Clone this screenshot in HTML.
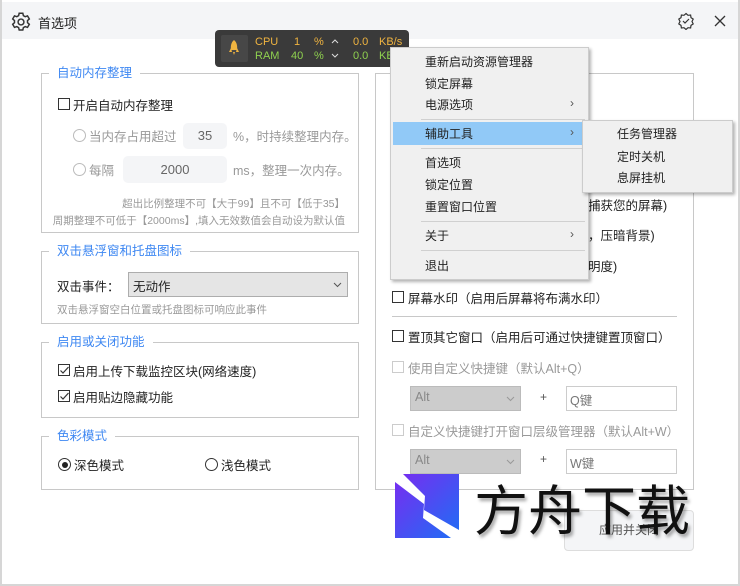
<!DOCTYPE html>
<html><head><meta charset="utf-8"><style>
*{box-sizing:border-box;margin:0;padding:0}
body{width:740px;height:586px;overflow:hidden;background:#fff;font-family:"Liberation Sans","Noto Sans CJK SC",sans-serif;font-size:12px;color:#222;position:relative}
.a{position:absolute;white-space:nowrap}
.win{position:absolute;left:0;top:0;width:740px;height:586px;border:2px solid #d6d6d6;border-top:none}
.tb{position:absolute;left:2px;top:2px;width:736px;height:37px;background:#f4f5f7}
.grp{position:absolute;border:1px solid #c8c8c8}
.lg{position:absolute;background:#fff;color:#3f88f2;font-size:12.5px;padding:0 8px;top:-9px;left:7px;line-height:16px}
.cb{position:absolute;width:12px;height:12px;border:1px solid #333;background:#fff}
.cb.d{border-color:#ccc}
.rd{position:absolute;width:13px;height:13px;border:1px solid #bbb;border-radius:50%;background:#fff}
.inp{position:absolute;background:#f4f5f7;border-radius:5px;text-align:center;color:#666;font-size:13px}
.gray{color:#999}
.menu{position:absolute;background:#f0f0f0;border:1px solid #ccc;box-shadow:2px 2px 3px rgba(0,0,0,.3)}
.sep{position:absolute;height:1px;background:#d0d0d0}
</style></head><body>
<div class="win"></div>
<div class="tb"></div>
<svg class="a" style="left:10px;top:11px" width="22" height="22" viewBox="0 0 24 24" fill="none" stroke="#333" stroke-width="1.6"><circle cx="12" cy="12" r="3.2"/><path d="M10 2.5h4l.6 2.6 2 1.1 2.5-.9 2 3.4-2 1.8v2.2l2 1.8-2 3.4-2.5-.9-2 1.1-.6 2.6h-4l-.6-2.6-2-1.1-2.5.9-2-3.4 2-1.8v-2.2l-2-1.8 2-3.4 2.5.9 2-1.1z"/></svg>
<div class="a" style="left:38px;top:13px;font-size:13px;color:#222">首选项</div>
<svg class="a" style="left:677px;top:12px" width="18" height="18" viewBox="0 0 18 18" fill="none" stroke="#333" stroke-width="1.2"><path d="M9 1.5l2 1.8 2.6-.3.4 2.6 2.2 1.5-1.2 2.4 1.2 2.4-2.2 1.5-.4 2.6-2.6-.3-2 1.8-2-1.8-2.6.3-.4-2.6-2.2-1.5 1.2-2.4-1.2-2.4 2.2-1.5.4-2.6 2.6.3z"/><path d="M6 9l2 2 4-4"/></svg>
<svg class="a" style="left:714px;top:15px" width="12" height="12" viewBox="0 0 12 12" stroke="#333" stroke-width="1.3"><path d="M1 1l10 10M11 1L1 11"/></svg>

<!-- monitor -->
<div class="a" style="left:215px;top:30px;width:194px;height:37px;background:#3a3a3a;border-radius:4px"></div>
<div class="a" style="left:221px;top:35px;width:27px;height:27px;background:#474747;border-radius:2px"></div>
<svg class="a" style="left:227px;top:39px" width="14" height="18" viewBox="0 0 14 18" fill="#f0b440"><path d="M7 1c3 2.5 3.5 6 3 10H4C3.5 7 4 3.5 7 1z"/><path d="M4 9l-2 4h3zM10 9l2 4H9zM6 13h2l-1 3z"/></svg>
<div class="a" style="left:255px;top:36px;color:#f0b440;font-size:11px;line-height:13px">CPU</div>
<div class="a" style="left:255px;top:50px;color:#8fd14f;font-size:11px;line-height:13px">RAM</div>
<div class="a" style="left:294px;top:36px;color:#f0b440;font-size:11px">1</div>
<div class="a" style="left:291px;top:50px;color:#8fd14f;font-size:11px">40</div>
<div class="a" style="left:314px;top:36px;color:#f0b440;font-size:11px">%</div>
<div class="a" style="left:314px;top:50px;color:#8fd14f;font-size:11px">%</div>
<svg class="a" style="left:331px;top:38px" width="8" height="6" viewBox="0 0 8 6" fill="none" stroke="#ddd"><path d="M1 5l3-3 3 3"/></svg>
<svg class="a" style="left:331px;top:53px" width="8" height="6" viewBox="0 0 8 6" fill="none" stroke="#ddd"><path d="M1 1l3 3 3-3"/></svg>
<div class="a" style="left:353px;top:36px;color:#f0b440;font-size:11px">0.0</div>
<div class="a" style="left:353px;top:50px;color:#8fd14f;font-size:11px">0.0</div>
<div class="a" style="left:379px;top:36px;color:#f0b440;font-size:11px">KB/s</div>
<div class="a" style="left:379px;top:50px;color:#8fd14f;font-size:11px">KB</div>

<!-- group 1 -->
<div class="grp" style="left:41px;top:73px;width:318px;height:160px"><div class="lg">自动内存整理</div></div>
<div class="cb" style="left:58px;top:98px"></div>
<div class="a" style="left:73px;top:95px;font-size:12.5px">开启自动内存整理</div>
<div class="rd" style="left:73px;top:129px"></div>
<div class="a gray" style="left:89px;top:126px;font-size:12.5px">当内存占用超过</div>
<div class="inp" style="left:183px;top:123px;width:44px;height:26px;line-height:26px">35</div>
<div class="a gray" style="left:233px;top:126px;font-size:12.5px">%，时持续整理内存。</div>
<div class="rd" style="left:73px;top:163px"></div>
<div class="a gray" style="left:89px;top:160px;font-size:12.5px">每隔</div>
<div class="inp" style="left:123px;top:156px;width:104px;height:27px;line-height:27px">2000</div>
<div class="a gray" style="left:233px;top:160px;font-size:12.5px">ms，整理一次内存。</div>
<div class="a gray" style="right:395px;top:196px;font-size:10.5px">超出比例整理不可【大于99】且不可【低于35】</div>
<div class="a gray" style="right:395px;top:213px;font-size:10.5px">周期整理不可低于【2000ms】,填入无效数值会自动设为默认值</div>

<!-- group 2 -->
<div class="grp" style="left:41px;top:251px;width:318px;height:73px"><div class="lg">双击悬浮窗和托盘图标</div></div>
<div class="a" style="left:57px;top:276px;font-size:12.5px">双击事件：</div>
<div class="a" style="left:128px;top:272px;width:220px;height:25px;background:#e5e5e5;border:1px solid #adadad;padding:3px 0 0 4px;font-size:12.5px">无动作</div>
<svg class="a" style="left:333px;top:282px" width="9" height="6" viewBox="0 0 9 6" fill="none" stroke="#555"><path d="M1 1l3.5 3.5L8 1"/></svg>
<div class="a gray" style="left:57px;top:302px;font-size:10.5px">双击悬浮窗空白位置或托盘图标可响应此事件</div>

<!-- group 3 -->
<div class="grp" style="left:41px;top:342px;width:318px;height:76px"><div class="lg">启用或关闭功能</div></div>
<div class="cb" style="left:58px;top:364px"></div><svg class="a" style="left:59px;top:365px" width="11" height="11" viewBox="0 0 11 11" fill="none" stroke="#333" stroke-width="1.2"><path d="M1.5 5.5l2.5 2.5 5.5-6"/></svg>
<div class="a" style="left:73px;top:361px;font-size:12.5px">启用上传下载监控区块(网络速度)</div>
<div class="cb" style="left:58px;top:390px"></div><svg class="a" style="left:59px;top:391px" width="11" height="11" viewBox="0 0 11 11" fill="none" stroke="#333" stroke-width="1.2"><path d="M1.5 5.5l2.5 2.5 5.5-6"/></svg>
<div class="a" style="left:73px;top:387px;font-size:12.5px">启用贴边隐藏功能</div>

<!-- group 4 -->
<div class="grp" style="left:41px;top:436px;width:318px;height:54px"><div class="lg">色彩模式</div></div>
<div class="rd" style="left:58px;top:458px;border-color:#333"></div><div class="a" style="left:62px;top:462px;width:6px;height:6px;border-radius:50%;background:#222"></div>
<div class="a" style="left:74px;top:455px;font-size:12.5px">深色模式</div>
<div class="rd" style="left:205px;top:458px;border-color:#333"></div>
<div class="a" style="left:221px;top:455px;font-size:12.5px">浅色模式</div>

<!-- right group -->
<div class="grp" style="left:375px;top:73px;width:319px;height:417px"></div>
<div class="a" style="left:588px;top:195px;font-size:12.5px">捕获您的屏幕)</div>
<div class="a" style="left:588px;top:225px;font-size:12.5px">，压暗背景)</div>
<div class="a" style="left:588px;top:256px;font-size:12.5px">明度)</div>
<div class="cb" style="left:392px;top:291px"></div>
<div class="a" style="left:408px;top:288px;font-size:12.5px">屏幕水印（启用后屏幕将布满水印）</div>
<div class="a" style="left:392px;top:316px;width:285px;height:1px;background:#c8c8c8"></div>
<div class="cb" style="left:392px;top:330px"></div>
<div class="a" style="left:408px;top:327px;font-size:12.5px">置顶其它窗口（启用后可通过快捷键置顶窗口）</div>
<div class="cb d" style="left:392px;top:361px"></div>
<div class="a gray" style="left:408px;top:358px;font-size:12.5px">使用自定义快捷键（默认Alt+Q）</div>
<div class="a" style="left:410px;top:386px;width:111px;height:25px;background:#ccc;border:1px solid #bbb;color:#888;padding:3px 0 0 4px;font-size:12.5px">Alt</div>
<svg class="a" style="left:506px;top:396px" width="9" height="6" viewBox="0 0 9 6" fill="none" stroke="#999"><path d="M1 1l3.5 3.5L8 1"/></svg>
<div class="a" style="left:540px;top:390px;color:#555">+</div>
<div class="a" style="left:566px;top:386px;width:111px;height:25px;border:1px solid #ccc;color:#777;padding:3px 0 0 3px;font-size:12.5px">Q键</div>
<div class="cb d" style="left:392px;top:424px"></div>
<div class="a gray" style="left:408px;top:421px;font-size:12.5px">自定义快捷键打开窗口层级管理器（默认Alt+W）</div>
<div class="a" style="left:410px;top:449px;width:111px;height:25px;background:#ccc;border:1px solid #bbb;color:#888;padding:3px 0 0 4px;font-size:12.5px">Alt</div>
<svg class="a" style="left:506px;top:459px" width="9" height="6" viewBox="0 0 9 6" fill="none" stroke="#999"><path d="M1 1l3.5 3.5L8 1"/></svg>
<div class="a" style="left:540px;top:452px;color:#555">+</div>
<div class="a" style="left:566px;top:449px;width:111px;height:25px;border:1px solid #ccc;color:#777;padding:3px 0 0 3px;font-size:12.5px">W键</div>

<!-- button -->
<div class="a" style="left:564px;top:510px;width:130px;height:41px;background:#f4f5f7;border:1px solid #ddd;border-radius:4px;text-align:center;line-height:39px;color:#555">应用并关闭</div>

<!-- logo watermark -->
<svg class="a" style="left:395px;top:474px" width="66" height="66" viewBox="0 0 66 66"><defs><linearGradient id="g" x1="0" y1="0" x2="1" y2="1"><stop offset="0" stop-color="#7a2bf0"/><stop offset="1" stop-color="#1e6ef5"/></linearGradient></defs><rect x="0" y="0" width="64" height="64" fill="url(#g)"/><path d="M0 0h8l22 22-1 14 35 20v8h-8L28 44l1-14L0 8z" fill="#fff"/></svg>
<div class="a" style="left:474px;top:474px;font-size:54px;line-height:66px;font-family:'Noto Sans CJK SC',sans-serif;color:#111;letter-spacing:0;text-shadow:2px 3px 3px rgba(0,0,0,.35)">方舟下载</div>

<!-- context menu -->
<div class="menu" style="left:390px;top:47px;width:199px;height:233px"></div>
<div class="a" style="left:393px;top:122px;width:189px;height:23px;background:#91c9f7"></div>
<div class="a" style="left:425px;top:53px">重新启动资源管理器</div>
<div class="a" style="left:425px;top:75px">锁定屏幕</div>
<div class="a" style="left:425px;top:96px">电源选项</div>
<div class="a" style="left:570px;top:96px;color:#555">›</div>
<div class="sep" style="left:421px;top:119px;width:164px"></div>
<div class="a" style="left:425px;top:125px">辅助工具</div>
<div class="a" style="left:570px;top:125px;color:#555">›</div>
<div class="sep" style="left:421px;top:148px;width:164px"></div>
<div class="a" style="left:425px;top:154px">首选项</div>
<div class="a" style="left:425px;top:176px">锁定位置</div>
<div class="a" style="left:425px;top:198px">重置窗口位置</div>
<div class="sep" style="left:421px;top:221px;width:164px"></div>
<div class="a" style="left:425px;top:227px">关于</div>
<div class="a" style="left:570px;top:227px;color:#555">›</div>
<div class="sep" style="left:421px;top:250px;width:164px"></div>
<div class="a" style="left:425px;top:257px">退出</div>

<div class="menu" style="left:582px;top:120px;width:151px;height:73px"></div>
<div class="a" style="left:617px;top:125px">任务管理器</div>
<div class="a" style="left:617px;top:148px">定时关机</div>
<div class="a" style="left:617px;top:169px">息屏挂机</div>
</body></html>
